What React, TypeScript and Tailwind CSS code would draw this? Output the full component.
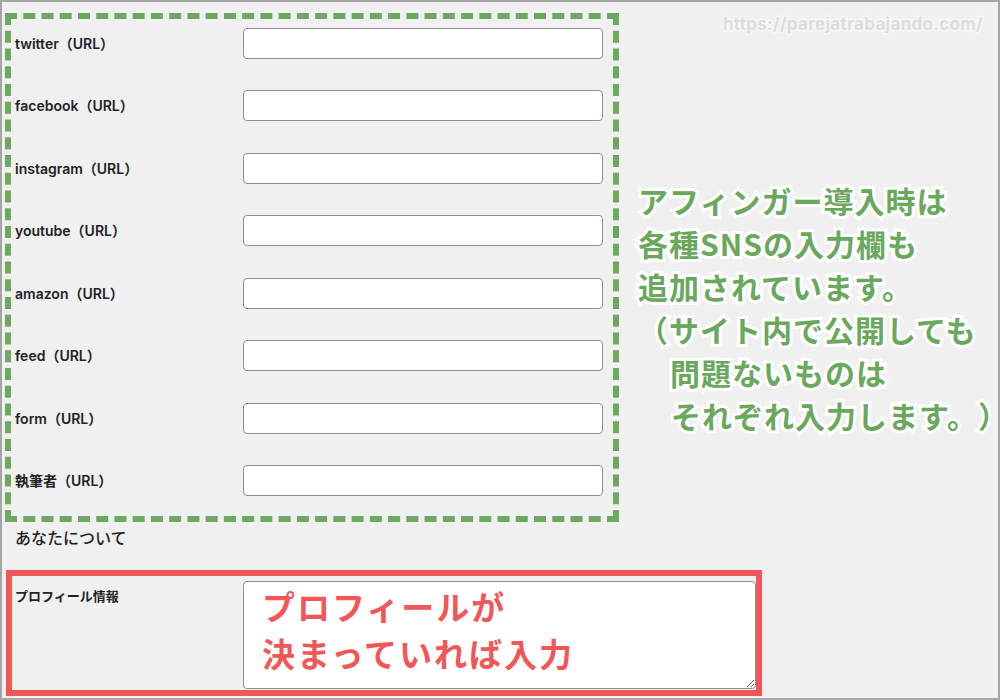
import React from "react";

const fields = [
  "twitter（URL）",
  "facebook（URL）",
  "instagram（URL）",
  "youtube（URL）",
  "amazon（URL）",
  "feed（URL）",
  "form（URL）",
  "執筆者（URL）",
];

const uiFont = "font-['Inter','Noto_Sans_CJK_JP',sans-serif]";
const noteFont = "font-['Noto_Sans_CJK_JP',sans-serif]";

export default function App() {
  return (
    <div className="relative w-[1000px] h-[700px] overflow-hidden border-2 border-[#a5a5a5] bg-[#f0f0f0] text-[#1d2327]">
      {/* watermark */}
      <div
        className={`absolute right-[15px] top-[10px] text-[17px] font-bold tracking-[0.3px] text-[#dcdcdc] [-webkit-text-stroke:3px_#f7f7f7] [paint-order:stroke_fill] ${uiFont}`}
      >
        https://parejatrabajando.com/
      </div>

      <div className="flex items-start">
        {/* SNS fields, green annotation frame */}
        <div className="ml-[3px] mt-[11px] w-[614px] h-[509px] shrink-0 border-[6px] border-dashed border-[#6ca85f]">
          <div className="flex flex-col gap-y-[31.43px] pt-[9px] pl-[4px]">
            {fields.map((f) => (
              <div key={f} className="flex items-center">
                <label className={`w-[228px] text-[14px] font-semibold ${uiFont}`}>{f}</label>
                <input
                  type="text"
                  className="w-[360px] h-[31px] bg-white border border-[#8c8f94] rounded-[4px]"
                />
              </div>
            ))}
          </div>
        </div>

        {/* green note */}
        <div
          className={`ml-[19px] mt-[177px] text-[30px] leading-[43px] font-bold tracking-[1px] whitespace-nowrap text-[#6aa85d] [text-spacing-trim:space-all] [-webkit-text-stroke:6px_#fff] [paint-order:stroke_fill] ${noteFont}`}
        >
          <div>アフィンガー導入時は</div>
          <div>各種SNSの入力欄も</div>
          <div>追加されています。</div>
          <div>（サイト内で公開しても</div>
          <div className="pl-[32px]">問題ないものは</div>
          <div className="pl-[33px]">それぞれ入力します。）</div>
        </div>
      </div>

      <h2 className={`ml-[13px] mt-[4px] text-[16px] leading-[24px] font-medium ${uiFont}`}>あなたについて</h2>

      {/* profile, red annotation frame */}
      <div className="ml-[4px] mt-[20px] w-[756px] h-[126px] border-[6px] border-[#f25757]">
        <div className="flex items-start pt-[5px] pl-[3px]">
          <label className={`w-[228px] mt-[5px] text-[13px] leading-[20px] font-semibold ${uiFont}`}>
            プロフィール情報
          </label>
          <div className="relative">
            <textarea className="block w-[513px] h-[108px] bg-white border border-[#8c8f94] rounded-[4px]" />
            <div
              className={`pointer-events-none absolute left-[19px] top-[2px] text-[33px] leading-[47px] font-bold tracking-[2px] text-[#f25757] ${noteFont}`}
            >
              <div>プロフィールが</div>
              <div>決まっていれば入力</div>
            </div>
          </div>
        </div>
      </div>
    </div>
  );
}
